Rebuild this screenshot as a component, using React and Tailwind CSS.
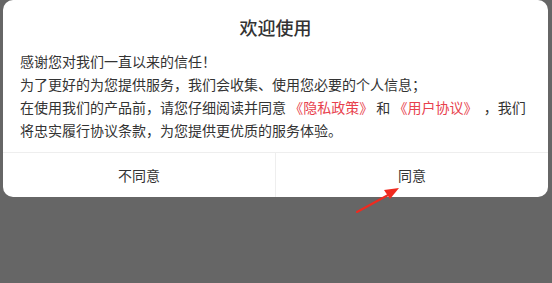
import React from "react";

const FONT = { fontFamily: '"Noto Sans CJK SC", "Noto Sans", sans-serif' };

export default function App() {
  return (
    <div className="relative w-[552px] h-[283px] bg-[#666666] overflow-hidden" style={FONT}>
      <div className="ml-[3px] w-[545px] h-[197px] bg-white rounded-[10px] flex flex-col">
        <div className="pt-[15px] h-[50px] text-center text-[18px] leading-[24px] font-medium text-[#333]">欢迎使用</div>
        <div className="px-[17px] text-[14px] leading-[23px] text-[#333] flex-1 whitespace-pre">
          <p>感谢您对我们一直以来的信任！</p>
          <p>为了更好的为您提供服务，我们会收集、使用您必要的个人信息；</p>
          <p>
            {"在使用我们的产品前，请您仔细阅读并同意 "}
            <span className="text-[#e8414d]">《隐私政策》</span>
            {" 和 "}
            <span className="text-[#e8414d]">《用户协议》</span>
            {"  ，我们"}
          </p>
          <p>将忠实履行协议条款，为您提供更优质的服务体验。</p>
        </div>
        <div className="h-[45px] border-t border-[#eeeeee] flex text-[14px] text-[#333]">
          <button className="flex-1 flex items-center justify-center border-r border-[#eeeeee]">不同意</button>
          <button className="flex-1 flex items-center justify-center">同意</button>
        </div>
      </div>
      {/* 红色箭头标注 */}
      <svg className="absolute left-0 top-0" width="552" height="283" viewBox="0 0 552 283">
        <line x1="357" y1="212" x2="390" y2="194" stroke="#f02a1f" strokeWidth="2" strokeLinecap="round" />
        <polygon points="399,188 384,190 390,199" fill="#f02a1f" />
      </svg>
    </div>
  );
}
